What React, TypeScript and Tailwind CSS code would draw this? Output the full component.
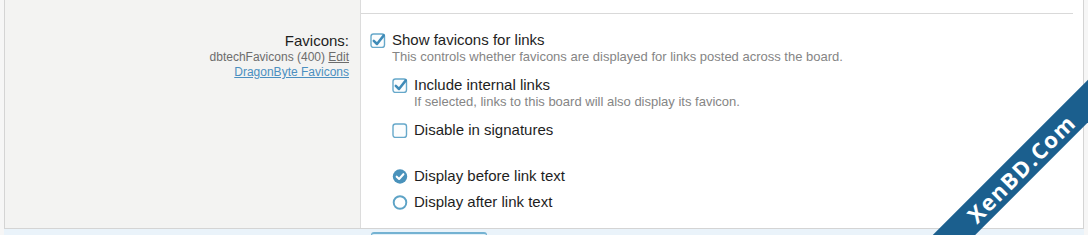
import React from 'react';

function CheckBox({ checked }: { checked?: boolean }) {
  return (
    <svg width="16" height="16" viewBox="0 0 16 16" className="shrink-0">
      <rect x="1" y="2" width="13.5" height="13.5" rx="2.5" fill="#fbfdfe" stroke="#66a8ca" strokeWidth="1.4" />
      {checked && (
        <path d="M3.8 8.8 L7 12 L13.8 3.4" fill="none" stroke="#3f8bb8" strokeWidth="2.5" strokeLinecap="round" strokeLinejoin="round" />
      )}
    </svg>
  );
}

function Radio({ checked }: { checked?: boolean }) {
  return (
    <svg width="16" height="16" viewBox="0 0 16 16" className="shrink-0">
      {checked ? (
        <>
          <circle cx="8" cy="8.5" r="7.2" fill="#4a92bb" />
          <path d="M4.7 8.7 L7.1 11 L11.4 6.2" fill="none" stroke="#fff" strokeWidth="2.1" strokeLinecap="round" strokeLinejoin="round" />
        </>
      ) : (
        <circle cx="8" cy="8.5" r="6.3" fill="#fff" stroke="#5da3c6" strokeWidth="1.9" />
      )}
    </svg>
  );
}

function Option({ control, label }: { control: React.ReactNode; label: string }) {
  return (
    <div className="flex items-center gap-[6px] text-[15px] leading-[18px] text-[#1e1e1e]">
      {control}
      <span>{label}</span>
    </div>
  );
}

function Hint({ children }: { children: React.ReactNode }) {
  return <p className="text-[13px] leading-[16px] text-[#858585] pl-[22px]">{children}</p>;
}

export default function App() {
  return (
    <div className="relative w-[1088px] h-[235px] overflow-hidden bg-[#f6f6f6] font-['Liberation_Sans',Arial,sans-serif]">
      <div className="mx-[4px] flex h-[229px] border-x border-b border-[#d4d4d4] bg-white">
        {/* Label column */}
        <div className="w-[356px] shrink-0 bg-[#f3f3f2] border-r border-[#dcdcdc] pt-[32px] pr-[11px] text-right">
          <div className="text-[15px] leading-[18px] text-[#1e1e1e]">Favicons:</div>
          <div className="text-[12px] leading-[15px] text-[#6c6c6c]">
            dbtechFavicons (400) <span className="underline">Edit</span>
          </div>
          <div className="text-[12px] leading-[15px] text-[#4b8fc0] underline">DragonByte Favicons</div>
        </div>

        {/* Options column */}
        <div className="flex-1">
          <div className="h-[14px] border-b border-[#d9d9d9] mr-[10px]" />
          <div className="pl-[9px] pt-[17px]">
            <Option control={<CheckBox checked />} label="Show favicons for links" />
            <Hint>This controls whether favicons are displayed for links posted across the board.</Hint>

            <div className="pl-[22px]">
              <div className="mt-[11px]">
                <Option control={<CheckBox checked />} label="Include internal links" />
                <Hint>If selected, links to this board will also display its favicon.</Hint>
              </div>
              <div className="mt-[11px]">
                <Option control={<CheckBox />} label="Disable in signatures" />
              </div>
              <div className="mt-[28px]">
                <Option control={<Radio checked />} label="Display before link text" />
              </div>
              <div className="mt-[8px]">
                <Option control={<Radio />} label="Display after link text" />
              </div>
            </div>
          </div>
        </div>
      </div>

      {/* Footer strip */}
      <div className="mx-[4px] h-[6px] bg-[#eaf3fa] pl-[367px] pt-[3px]">
        <div className="w-[116px] h-[3px] rounded-t-[3px] border-t-2 border-x border-[#74b2d2] bg-[#e2f0f8]" />
      </div>

      {/* Watermark */}
      <div className="absolute left-[871px] top-[153px] w-[300px] h-[30px] -rotate-[45deg] bg-[#1b5f8e] flex items-center justify-center">
        <span className="text-white font-['Open_Sans',sans-serif] font-bold text-[22px] leading-none tracking-[1.5px]">XenBD.Com</span>
      </div>
    </div>
  );
}
